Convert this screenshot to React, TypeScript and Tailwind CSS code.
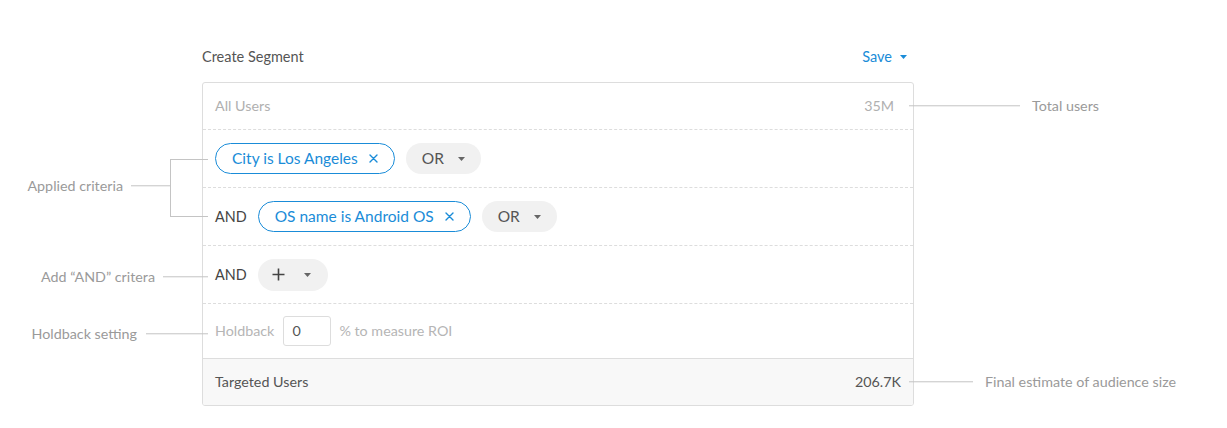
import React from 'react';

function Caret({ className = '' }: { className?: string }) {
  return (
    <svg width="7" height="4" viewBox="0 0 7 4" className={className}>
      <path d="M0 0h7L3.5 4z" fill="currentColor" />
    </svg>
  );
}

function Cross() {
  return (
    <svg width="9" height="9" viewBox="0 0 9 9" className="text-[#1a8cd8]">
      <path d="M1 1l7 7M8 1L1 8" stroke="currentColor" strokeWidth="1.4" strokeLinecap="round" />
    </svg>
  );
}

function CriteriaPill({ label }: { label: string }) {
  return (
    <div className="flex items-center h-[31px] rounded-full border border-[#1a8cd8] pl-[16px] pr-[16px] gap-[11px] text-[15.5px] text-[#1a8cd8]">
      <span>{label}</span>
      <Cross />
    </div>
  );
}

function GrayPill({ children }: { children: React.ReactNode }) {
  return (
    <div className="flex items-center h-[31px] rounded-full bg-[#f1f1f1] pl-[16px] pr-[16px] gap-[14px] text-[15.5px] text-[#555]">
      {children}
      <Caret className="text-[#666]" />
    </div>
  );
}

function Plus() {
  return (
    <svg width="13" height="13" viewBox="0 0 13 13" className="text-[#444]">
      <path d="M6.5 0.5v12M0.5 6.5h12" stroke="currentColor" strokeWidth="1.6" />
    </svg>
  );
}

export default function App() {
  return (
    <div className="relative w-[1227px] h-[428px] bg-white font-['Lato',sans-serif] overflow-hidden">
      <div className="ml-[202px] w-[712px] pt-[45px]">
        {/* Header */}
        <div className="flex items-center justify-between h-[24px] mb-[13px] pr-[7px]">
          <span className="text-[14.5px] text-[#555]">Create Segment</span>
          <button className="flex items-center gap-[8px] text-[14.5px] text-[#1a8cd8]">
            Save
            <Caret />
          </button>
        </div>

        {/* Segment card */}
        <div className="border border-[#dddddd] rounded-[3px] overflow-hidden">
          <div className="flex items-center justify-between h-[47px] border-b border-dashed border-[#dddddd] pl-[12px] pr-[19px] text-[14.3px] text-[#b0b0b0]">
            <span>All Users</span>
            <span>35M</span>
          </div>

          <div className="flex items-center h-[58px] border-b border-dashed border-[#dddddd] pl-[12px] gap-[11px]">
            <CriteriaPill label="City is Los Angeles" />
            <GrayPill>OR</GrayPill>
          </div>

          <div className="flex items-center h-[58px] border-b border-dashed border-[#dddddd] pl-[12px] gap-[11px]">
            <span className="text-[14.4px] text-[#444]">AND</span>
            <CriteriaPill label="OS name is Android OS" />
            <GrayPill>OR</GrayPill>
          </div>

          <div className="flex items-center h-[58px] border-b border-dashed border-[#dddddd] pl-[12px] gap-[11px]">
            <span className="text-[14.4px] text-[#444]">AND</span>
            <div className="flex items-center h-[32px] rounded-full bg-[#f1f1f1] pl-[14px] pr-[17px] gap-[19px]">
              <Plus />
              <Caret className="text-[#666]" />
            </div>
          </div>

          <div className="flex items-center h-[55px] border-b border-[#dddddd] pl-[12px] text-[14.3px] text-[#b5b5b5]">
            <span>Holdback</span>
            <div className="flex items-center ml-[9px] w-[48px] h-[30px] border border-[#dddddd] rounded-[3px] pl-[8px] text-[14.3px] text-[#555]">
              0
            </div>
            <span className="ml-[8px]">% to measure ROI</span>
          </div>

          <div className="flex items-center justify-between h-[46px] bg-[#f8f8f8] pl-[12px] pr-[12px] text-[14.3px] text-[#555]">
            <span>Targeted Users</span>
            <span>206.7K</span>
          </div>
        </div>
      </div>

      {/* Callouts, left */}
      <div className="absolute right-[1057px] top-[186px] -translate-y-1/2 flex items-center gap-[8px]">
        <span className="text-[14.3px] text-[#9a9a9a] whitespace-nowrap">Applied criteria</span>
        <div className="w-[39px] h-px bg-[#c4c4c4]" />
      </div>
      <div className="absolute left-[170px] top-[159px] w-[38px] h-[58px] border-l border-t border-b border-[#c4c4c4]" />

      <div className="absolute right-[1019px] top-[277px] -translate-y-1/2 flex items-center gap-[8px]">
        <span className="text-[14.3px] text-[#9a9a9a] whitespace-nowrap">Add “AND” critera</span>
        <div className="w-[45px] h-px bg-[#c4c4c4]" />
      </div>

      <div className="absolute right-[1019px] top-[334px] -translate-y-1/2 flex items-center gap-[9px]">
        <span className="text-[14.3px] text-[#9a9a9a] whitespace-nowrap">Holdback setting</span>
        <div className="w-[62px] h-px bg-[#c4c4c4]" />
      </div>

      {/* Callouts, right */}
      <div className="absolute left-[909px] top-[106px] -translate-y-1/2 flex items-center gap-[12px]">
        <div className="w-[111px] h-px bg-[#c4c4c4]" />
        <span className="text-[14.3px] text-[#9a9a9a] whitespace-nowrap">Total users</span>
      </div>

      <div className="absolute left-[909px] top-[382px] -translate-y-1/2 flex items-center gap-[12px]">
        <div className="w-[64px] h-px bg-[#c4c4c4]" />
        <span className="text-[14.3px] text-[#9a9a9a] whitespace-nowrap">Final estimate of audience size</span>
      </div>
    </div>
  );
}
